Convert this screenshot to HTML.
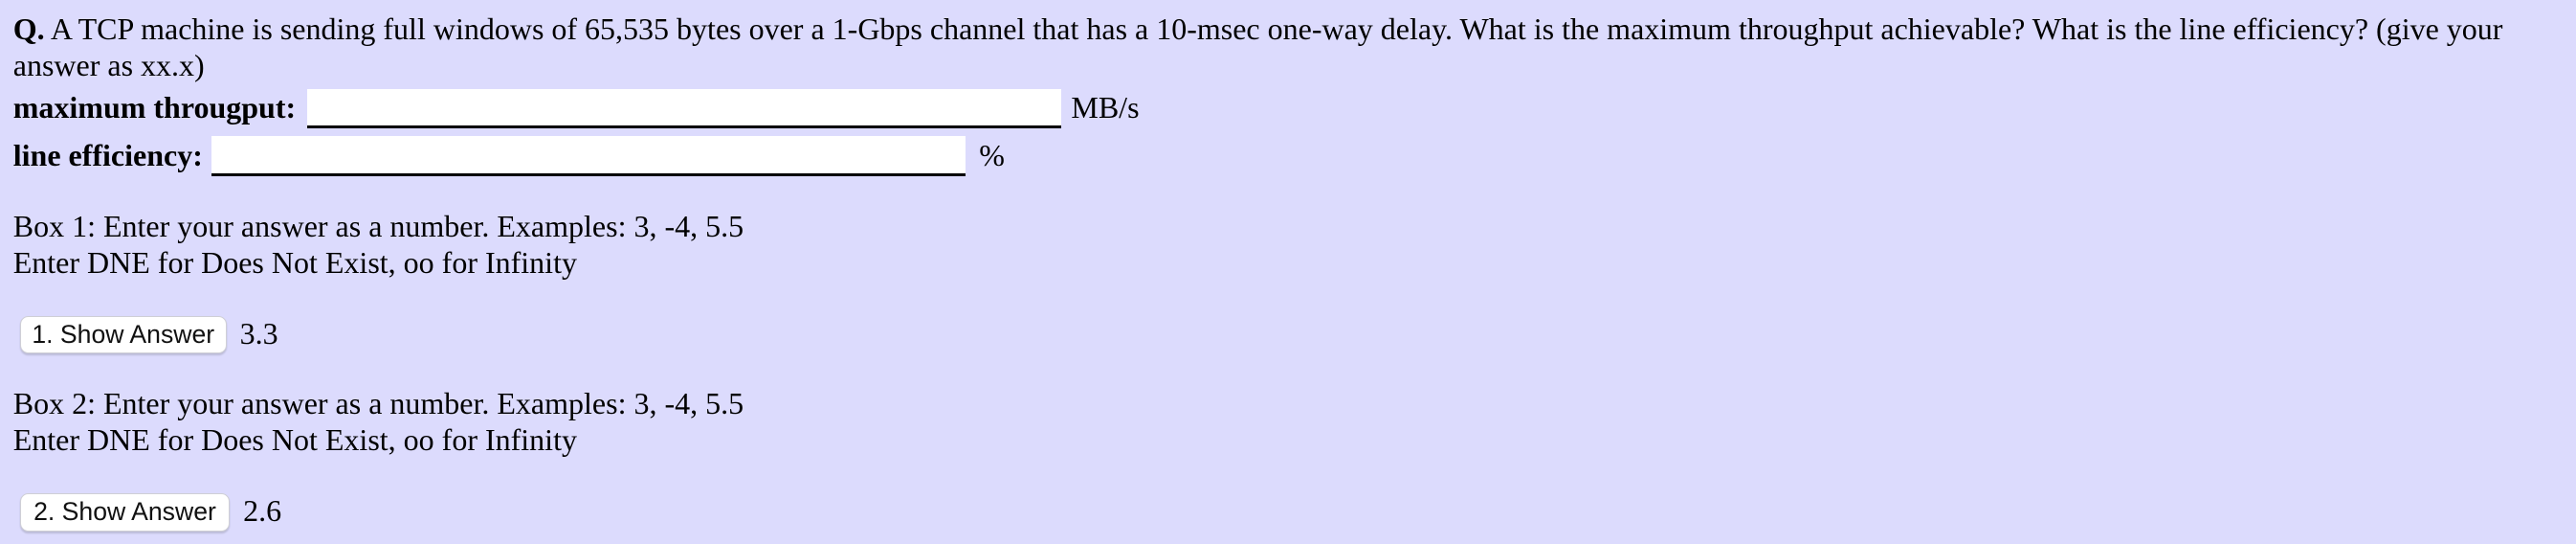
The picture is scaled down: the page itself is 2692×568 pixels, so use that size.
<!DOCTYPE html>
<html><head><meta charset="utf-8"><style>
html,body{margin:0;padding:0;background:#dcdbfd;}
body{width:1568px;height:331px;zoom:1.71684;position:relative;overflow:hidden;font-family:"Liberation Serif",serif;font-size:18.65px;color:#000;}
.a{position:absolute;white-space:nowrap;line-height:22px;}
.in{position:absolute;background:#fff;border-bottom:2px solid #000;box-sizing:border-box;height:24px;}
.btn{position:absolute;background:#fff;border:1px solid #cfcfd6;border-radius:5px;box-shadow:0 1px 1px rgba(0,0,0,.15);font-family:"Liberation Sans",sans-serif;font-size:15.5px;line-height:21px;height:23px;box-sizing:border-box;text-align:center;color:#111;}
</style></head><body>
<div class="a" style="left:8px;top:7px;width:1552px;white-space:normal;"><b>Q.</b> A TCP machine is sending full windows of 65,535 bytes over a 1-Gbps channel that has a 10-msec one-way delay. What is the maximum throughput achievable? What is the line efficiency? (give your answer as xx.x)</div>
<div class="a" style="left:8px;top:55px;"><b>maximum througput:</b></div>
<div class="in" style="left:187px;top:54px;width:459px;"></div>
<div class="a" style="left:652px;top:55px;">MB/s</div>
<div class="a" style="left:8px;top:84px;"><b>line efficiency:</b></div>
<div class="in" style="left:129px;top:83px;width:459px;"></div>
<div class="a" style="left:596px;top:84px;">%</div>
<div class="a" style="left:8px;top:127px;">Box 1: Enter your answer as a number. Examples: 3, -4, 5.5</div>
<div class="a" style="left:8px;top:149px;">Enter DNE for Does Not Exist, oo for Infinity</div>
<div class="btn" style="left:12px;top:192px;width:126px;">1. Show Answer</div>
<div class="a" style="left:146px;top:192px;">3.3</div>
<div class="a" style="left:8px;top:235px;">Box 2: Enter your answer as a number. Examples: 3, -4, 5.5</div>
<div class="a" style="left:8px;top:257px;">Enter DNE for Does Not Exist, oo for Infinity</div>
<div class="btn" style="left:12px;top:300px;width:128px;">2. Show Answer</div>
<div class="a" style="left:148px;top:300px;">2.6</div>
</body></html>
